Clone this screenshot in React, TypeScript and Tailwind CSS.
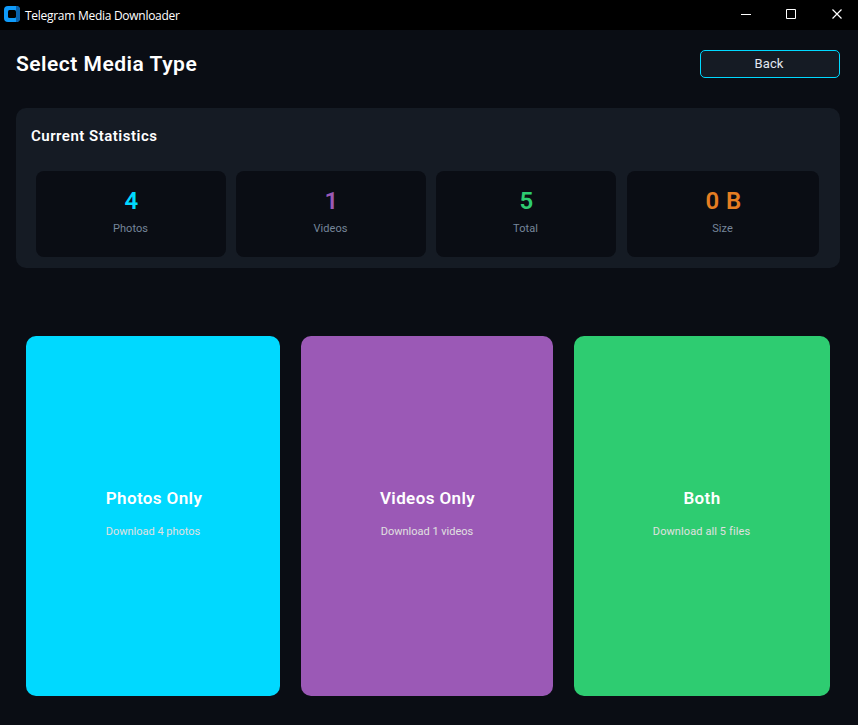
const stats = [
  { value: '4', label: 'Photos', box: 'w-[190px]', color: 'text-[#00d9ff]' },
  { value: '1', label: 'Videos', box: 'ml-[10px] w-[190px]', color: 'text-[#9b59b6]' },
  { value: '5', label: 'Total', box: 'ml-[10px] w-[180px]', color: 'text-[#2ecc71]' },
  { value: '0 B', label: 'Size', box: 'ml-[11px] w-[192px]', color: 'text-[#e67e22]' },
];

const choices = [
  { title: 'Photos Only', detail: 'Download 4 photos', box: 'w-[254px] bg-[#00d9ff] pl-[2px]', text: 'pr-[2px]' },
  { title: 'Videos Only', detail: 'Download 1 videos', box: 'ml-[21px] w-[252px] bg-[#9b59b6] pl-[1px]', text: 'pr-[1px]' },
  { title: 'Both', detail: 'Download all 5 files', box: 'ml-[21px] w-[256px] bg-[#2ecc71]', text: 'pr-px tracking-[0.1px]' },
];

function TitleBar() {
  return (
    <header className="flex h-[30px] items-center bg-black pl-1 text-white">
      <svg width="16" height="16" viewBox="0 0 16 16" className="-mt-[2px]">
        <rect width="16" height="16" rx="4" fill="#0f9bfa" />
        <path d="M12 0Q16 0 16 4V12Q16 16 12 16Z" fill="#0a62ac" />
        <rect x="4" y="4" width="8" height="8" rx="1.500" fill="#000" />
      </svg>
      <span className="mt-px ml-[5px] font-['Open_Sans','Noto_Sans',sans-serif] text-[12px] leading-[16px] tracking-[-0.28px]">
        Telegram Media Downloader
      </span>
      <svg width="104" height="12" viewBox="0 0 104 12" className="-mt-[2px] mr-[14px] ml-auto" fill="none" stroke="#fff">
        <path d="M1 6.5H11" />
        <path d="M46.500 1.500H55.500V10.500H46.500Z" />
        <path d="M92.500 1.500L101.500 10.500M101.500 1.500L92.500 10.500" strokeWidth="1.2" />
      </svg>
    </header>
  );
}

export default function App() {
  return (
    <div className="h-[725px] w-[858px] overflow-hidden bg-[#0a0d14] font-[Roboto,sans-serif] text-white">
      <TitleBar />
      <main className="pt-5 pr-[18px] pl-4">
        <div className="flex h-7 items-center justify-between">
          <h1 className="text-[21px] leading-7 font-semibold tracking-[0.5px]">Select Media Type</h1>
          <button className="h-7 w-[140px] rounded-[5px] border border-[#00d9ff] bg-[#151b24] pr-[2px] pb-px text-[13px] leading-none tracking-[0.1px] text-[#e2e8f0]">
            Back
          </button>
        </div>
        <section className="mt-[30px] h-[160px] rounded-[10px] bg-[#151b24] pt-[18px]">
          <h2 className="ml-[15px] text-[15px] leading-5 font-semibold tracking-[0.5px]">Current Statistics</h2>
          <div className="mt-[25px] ml-5 flex">
            {stats.map((s) => (
              <div key={s.label} className={`flex h-[86px] flex-col items-center rounded-[8px] bg-[#0a0d14] pt-[15px] ${s.box}`}>
                <div className={`pl-px text-[24px] leading-[30px] font-semibold tracking-[0.4px] ${s.color}`}>{s.value}</div>
                <div className="mt-[5px] pr-px text-[11px] leading-4 tracking-[0.05px] text-[#76869a]">{s.label}</div>
              </div>
            ))}
          </div>
        </section>
        <div className="mt-[68px] ml-[10px] flex">
          {choices.map((c) => (
            <button key={c.title} className={`flex h-[360px] flex-col items-center rounded-[10px] pt-[151px] ${c.box}`}>
              <span className="text-[17px] leading-[22px] font-semibold tracking-[0.4px]">{c.title}</span>
              <span className={`mt-[15px] text-[11px] leading-4 text-[#e0e0e0] ${c.text}`}>{c.detail}</span>
            </button>
          ))}
        </div>
      </main>
    </div>
  );
}
